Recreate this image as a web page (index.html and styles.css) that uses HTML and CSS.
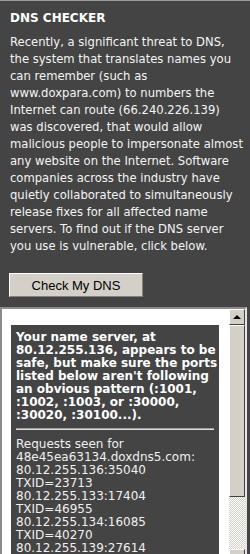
FILE: index.html
```html
<!DOCTYPE html>
<html lang="en">
<head>
    <meta charset="UTF-8">
    <meta name="viewport" content="width=device-width, initial-scale=1.0">
    <title>DNS Checker</title>
    <link rel="stylesheet" href="styles.css">
</head>
<body>
    <div class="panel">
        <h1>DNS CHECKER</h1>
        <p>Recently, a significant threat to DNS,<br>
        the system that translates names you<br>
        can remember (such as<br>
        www.doxpara.com) to numbers the<br>
        Internet can route (66.240.226.139)<br>
        was discovered, that would allow<br>
        malicious people to impersonate almost<br>
        any website on the Internet. Software<br>
        companies across the industry have<br>
        quietly collaborated to simultaneously<br>
        release fixes for all affected name<br>
        servers. To find out if the DNS server<br>
        you use is vulnerable, click below.</p>
        <div class="button-row">
            <button class="button" id="checkButton">Check My DNS</button>
        </div>
    </div>

    <div class="frame">
        <div class="frame-content">
            <div class="result">
                <div class="verdict">Your name server, at<br>80.12.255.136, appears to be<br>safe, but make sure the ports<br>listed below aren't following<br>an obvious pattern (:1001,<br>:1002, :1003, or :30000,<br>:30020, :30100...).</div>
                <hr>
                <div class="requests">
                    Requests seen for<br>
                    48e45ea63134.doxdns5.com:<br>
                    80.12.255.136:35040<br>
                    TXID=23713<br>
                    80.12.255.133:17404<br>
                    TXID=46955<br>
                    80.12.255.134:16085<br>
                    TXID=40270<br>
                    80.12.255.139:27614
                </div>
            </div>
        </div>
        <div class="scrollbar">
            <div class="scroll-btn"><span class="arrow-up"></span></div>
            <div class="scroll-thumb"></div>
            <div class="scroll-track"></div>
            <div class="scroll-btn"><span class="arrow-down"></span></div>
        </div>
    </div>
</body>
</html>
```

FILE: styles.css
```css
body {
    margin: 0;
    padding: 0;
    background-color: #444;
    border-top: 1px solid #9a9a9a;
    font-family: 'DejaVu Sans', Verdana, sans-serif;
    color: #fff;
    height: 553px;
    overflow: hidden;
}

.panel {
    padding: 9px 4px 0 10px;
}

h1 {
    font-size: 12px;
    line-height: 17px;
    font-weight: bold;
    margin: 0 0 7px;
}

.panel p {
    font-size: 11.6px;
    line-height: 17px;
    margin: 0;
    color: #f4f4f4;
    white-space: nowrap;
}

.button-row {
    margin-top: 18px;
    margin-left: -1px;
}

.button {
    width: 134px;
    height: 24px;
    background: #d4d0c8;
    color: #000;
    font-family: 'Liberation Sans', Arial, sans-serif;
    font-size: 13px;
    border: 1px solid;
    border-color: #fff #808080 #808080 #fff;
    padding: 0;
    cursor: pointer;
}

.frame {
    margin-top: 10px;
    width: 247px;
    height: 260px;
    box-sizing: border-box;
    border: 2px solid;
    border-color: #8c8c8c #e6e6e6 #e6e6e6 #8c8c8c;
    background: #fff;
    display: flex;
}

.frame-content {
    flex: 1;
    overflow: hidden;
    padding: 16px 10px 0 9px;
}

.result {
    background: #444;
    padding: 6px 5px 10px;
    font-size: 12px;
    line-height: 13px;
    white-space: nowrap;
}

.verdict {
    font-weight: bold;
}

.result hr {
    border: none;
    border-top: 1px solid #9a9a9a;
    border-bottom: 1px solid #dcdcdc;
    margin: 6px 0 8px;
}

.requests {
    color: #f0f0f0;
}

.scrollbar {
    width: 16px;
    display: flex;
    flex-direction: column;
    background: #d4d0c8;
}

.scroll-btn {
    height: 16px;
    box-sizing: border-box;
    border: 1px solid;
    border-color: #fff #404040 #404040 #fff;
    background: #d4d0c8;
    display: flex;
    align-items: center;
    justify-content: center;
}

.arrow-up {
    border-left: 4px solid transparent;
    border-right: 4px solid transparent;
    border-bottom: 4px solid #000;
}

.arrow-down {
    border-left: 4px solid transparent;
    border-right: 4px solid transparent;
    border-top: 4px solid #000;
}

.scroll-thumb {
    height: 172px;
    box-sizing: border-box;
    border: 1px solid;
    border-color: #fff #404040 #404040 #fff;
    background: #d4d0c8;
}

.scroll-track {
    flex: 1;
    background-color: #fff;
    background-image: repeating-conic-gradient(#d4d0c8 0 25%, #fff 0 50%);
    background-size: 2px 2px;
}
```
